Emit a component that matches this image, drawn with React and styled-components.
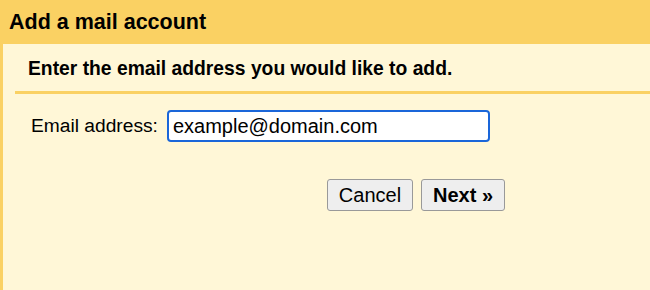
import React from 'react';
import styled, { createGlobalStyle } from 'styled-components';

const GlobalStyle = createGlobalStyle`
  html, body {
    margin: 0;
    padding: 0;
    background: #fff7d7;
  }
  body {
    font-family: "Liberation Sans", Arial, sans-serif;
    color: #000;
  }
`;

const Dialog = styled.div`
  width: 650px;
  height: 290px;
  display: flex;
  flex-direction: column;
  background: #fff7d7;
  overflow: hidden;
`;

const Header = styled.div`
  height: 44px;
  flex: none;
  background: #fad163;
  display: flex;
  align-items: center;
  padding-left: 9px;
`;

const Title = styled.h1`
  margin: 0;
  font-size: 21.5px;
  font-weight: bold;
`;

const Body = styled.div`
  flex: 1;
  border-left: 3px solid #fad163;
  padding: 0 0 0 12px;
`;

const Prompt = styled.div`
  padding: 14px 0 11px 13px;
  font-size: 19.3px;
  font-weight: bold;
  border-bottom: 3px solid #fad163;
`;

const FieldRow = styled.div`
  display: flex;
  align-items: center;
  gap: 9px;
  padding: 16px 0 0 16px;
`;

const Label = styled.label`
  font-size: 19.2px;
`;

const TextInput = styled.input`
  width: 323px;
  height: 32px;
  box-sizing: border-box;
  border: 2px solid #1a66d9;
  border-radius: 4px;
  background: #fff;
  padding: 0 4px;
  font-family: "Liberation Sans", Arial, sans-serif;
  font-size: 20px;
  color: #000;
  outline: none;
`;

const Actions = styled.div`
  display: flex;
  gap: 8px;
  padding: 37px 0 0 312px;
`;

const Button = styled.button`
  height: 32px;
  width: ${p => p.$width}px;
  box-sizing: border-box;
  border: 1px solid #999;
  border-radius: 3px;
  background: #eee;
  font-family: "Liberation Sans", Arial, sans-serif;
  font-size: 20px;
  font-weight: ${p => (p.$primary ? 'bold' : 'normal')};
  color: #000;
  padding: 0;
`;

export default function App() {
  return (
    <Dialog>
      <GlobalStyle />
      <Header>
        <Title>Add a mail account</Title>
      </Header>
      <Body>
        <Prompt>Enter the email address you would like to add.</Prompt>
        <FieldRow>
          <Label htmlFor="email">Email address:</Label>
          <TextInput id="email" defaultValue="example@domain.com" />
        </FieldRow>
        <Actions>
          <Button $width={86}>Cancel</Button>
          <Button $width={84} $primary>Next »</Button>
        </Actions>
      </Body>
    </Dialog>
  );
}
